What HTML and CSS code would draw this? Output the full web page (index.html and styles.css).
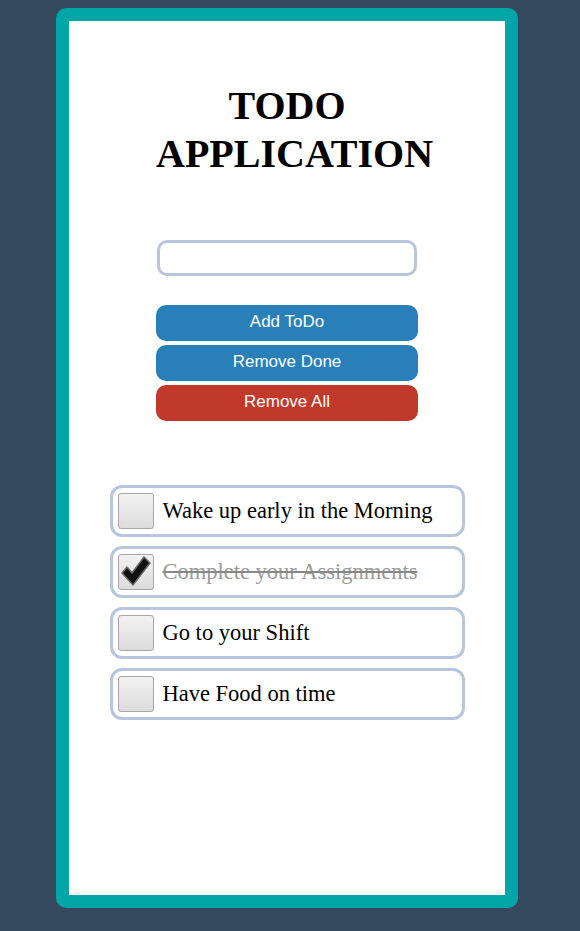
FILE: index.html
```html
<!DOCTYPE html>
<html>
<head>
<meta charset="utf-8">
<link rel="stylesheet" href="styles.css">
</head>
<body>
<div class="card">
  <div class="inner">
    <div class="controls">
      <h1 class="title">TODO APPLICATION</h1>
      <input class="field" type="text">
      <div class="buttons">
        <button class="btn blue">Add ToDo</button>
        <button class="btn blue">Remove Done</button>
        <button class="btn red">Remove All</button>
      </div>
    </div>
    <ul class="list">
      <li class="item"><span class="box"></span><span class="label">Wake up early in the Morning</span></li>
      <li class="item"><span class="box"><svg class="check" viewBox="0 0 36 36" width="36" height="36"><path d="M4 19 L9 13 L14 19 L26 3 L32 9 L15 31 Z" fill="#111" stroke="#6a6a6a" stroke-width="1.5" stroke-linejoin="round"/></svg></span><span class="label done">Complete your Assignments</span></li>
      <li class="item"><span class="box"></span><span class="label">Go to your Shift</span></li>
      <li class="item"><span class="box"></span><span class="label">Have Food on time</span></li>
    </ul>
  </div>
</div>
</body>
</html>
```
FILE: styles.css
```css
html, body { margin: 0; padding: 0; }
body { background: #34495e; font-family: "Liberation Serif", serif; }
.card {
  margin: 8px 0 0 56px;
  width: 436px;
  height: 874px;
  border: 13px solid #00a5a5;
  border-radius: 10px;
  background: #00a5a5;
}
.inner {
  background: #fff;
  height: 100%;
  display: flex;
  flex-direction: column;
  align-items: center;
}
.controls {
  width: 262px;
  display: flex;
  flex-direction: column;
  margin-top: 61px;
}
.title {
  width: 262px;
  margin: 0;
  font-size: 40px;
  line-height: 48px;
  font-weight: bold;
  text-align: center;
  color: #000;
}
.field {
  margin: 62px 0 0 1px;
  width: 260px;
  height: 36px;
  box-sizing: border-box;
  border: 3px solid #b7c6dc;
  border-radius: 10px;
  outline: none;
}
.buttons { display: flex; flex-direction: column; gap: 4px; margin-top: 29px; }
.btn {
  height: 36px;
  border: 0;
  border-radius: 10px;
  color: #fff;
  font-family: "Liberation Sans", Arial, sans-serif;
  font-size: 17px;
  padding: 0 0 3px;
}
.blue { background: #2980b9; }
.red { background: #c0392b; }
.list {
  list-style: none;
  margin: 64px 0 0;
  padding: 0;
  display: flex;
  flex-direction: column;
  gap: 9px;
}
.item {
  width: 355px;
  height: 52px;
  box-sizing: border-box;
  border: 3px solid #b7c6dc;
  border-radius: 12px;
  display: flex;
  align-items: center;
  padding-left: 5px;
  gap: 9px;
}
.box {
  width: 36px;
  height: 36px;
  flex: none;
  box-sizing: border-box;
  border: 1px solid #a6a6a6;
  border-radius: 3px;
  background: linear-gradient(#f2f2f2, #dcdcdc);
  position: relative;
}
.check { position: absolute; left: -1px; top: -1px; }
.label { font-size: 22.5px; color: #000; padding-bottom: 0; }
.done { color: #9a9a9a; text-decoration: line-through; text-decoration-color: #888; }
```
